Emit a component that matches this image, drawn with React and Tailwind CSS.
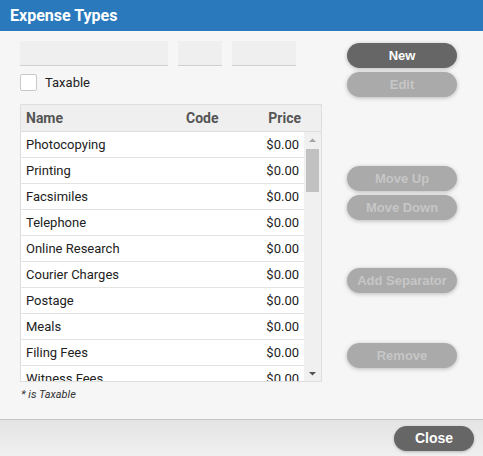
import React from "react";

const rows = [
    "Photocopying",
    "Printing",
    "Facsimiles",
    "Telephone",
    "Online Research",
    "Courier Charges",
    "Postage",
    "Meals",
    "Filing Fees",
    "Witness Fees",
];

const Btn = ({ children, disabled, className = "" }) => (
    <button
        className={
            "h-[25px] w-[110px] rounded-full text-[13px] font-bold shadow-[0_1px_4px_rgba(0,0,0,0.25)] font-['Liberation_Sans',Arial,sans-serif] " +
            (disabled ? "bg-[#aaaaaa] text-[#c6c6c6]" : "bg-[#666666] text-white") +
            " " +
            className
        }
    >
        {children}
    </button>
);

export default function App() {
    return (
        <div className="w-[483px] h-[456px] flex flex-col bg-[#f6f6f6] font-['Roboto',sans-serif] overflow-hidden">
            {/* Title bar */}
            <div className="h-[31px] shrink-0 bg-[#2a79bd] flex items-center px-[10px]">
                <h1 className="text-white font-bold text-[16px]">Expense Types</h1>
            </div>

            {/* Body */}
            <div className="flex-1 flex">
                <div className="w-[347px] pl-[20px] pt-[10px]">
                    <div className="flex gap-[10px]">
                        <div className="w-[148px] h-[25px] bg-[#efefef] border-b border-[#cfcfcf]" />
                        <div className="w-[44px] h-[25px] bg-[#efefef] border-b border-[#cfcfcf]" />
                        <div className="w-[64px] h-[25px] bg-[#efefef] border-b border-[#cfcfcf]" />
                    </div>
                    <label className="flex items-center mt-[8px] h-[17px]">
                        <span className="w-[17px] h-[17px] bg-white border border-[#c9c9c9] rounded-[2px]" />
                        <span className="ml-[8px] text-[13px] text-[#222]">Taxable</span>
                    </label>

                    <div className="mt-[13px] w-[302px] h-[278px] border border-[#dedede] flex flex-col bg-[#efefef]">
                        <div className="h-[27px] shrink-0 flex items-center text-[14px] font-bold text-[#555] border-b border-[#dedede]">
                            <span className="pl-[5px] w-[165px]">Name</span>
                            <span className="w-[60px]">Code</span>
                            <span className="w-[55px] text-right">Price</span>
                        </div>
                        <div className="flex flex-1 overflow-hidden">
                            <div className="w-[283px] overflow-hidden">
                                {rows.map((r) => (
                                    <div
                                        key={r}
                                        className="h-[26px] bg-white border-b border-[#e3e3e3] flex items-center justify-between px-[5px] text-[13px] text-[#222]"
                                    >
                                        <span>{r}</span>
                                        <span>$0.00</span>
                                    </div>
                                ))}
                            </div>
                            <div className="w-[17px] flex flex-col items-center bg-[#f0f0f0]">
                                <svg width="9" height="9" viewBox="0 0 9 9" className="mt-[4px]">
                                    <path d="M1 6 L4.5 2.5 L8 6 Z" fill="#a3a3a3" />
                                </svg>
                                <div className="w-[13px] h-[43px] bg-[#c1c1c1] mt-[4px]" />
                                <div className="flex-1" />
                                <svg width="9" height="9" viewBox="0 0 9 9" className="mb-[3px]">
                                    <path d="M1 3 L4.5 6.5 L8 3 Z" fill="#505050" />
                                </svg>
                            </div>
                        </div>
                    </div>
                    <p className="mt-[5px] ml-[1px] text-[11px] italic text-[#333]">* is Taxable</p>
                </div>

                <div className="flex flex-col pt-[12px]">
                    <Btn>New</Btn>
                    <Btn disabled className="mt-[4px]">Edit</Btn>
                    <Btn disabled className="mt-[69px]">Move Up</Btn>
                    <Btn disabled className="mt-[4px]">Move Down</Btn>
                    <Btn disabled className="mt-[48px]">Add Separator</Btn>
                    <Btn disabled className="mt-[50px]">Remove</Btn>
                </div>
            </div>

            {/* Footer */}
            <div className="h-[37px] shrink-0 border-t border-[#c6c6c6] bg-gradient-to-b from-[#e4e4e4] to-[#f0f0f0] flex items-center justify-end pr-[9px]">
                <button className="h-[25px] w-[80px] rounded-full bg-[#666666] text-white text-[14px] font-bold shadow-[0_1px_3px_rgba(0,0,0,0.25)] font-['Liberation_Sans',Arial,sans-serif]">
                    Close
                </button>
            </div>
        </div>
    );
}
